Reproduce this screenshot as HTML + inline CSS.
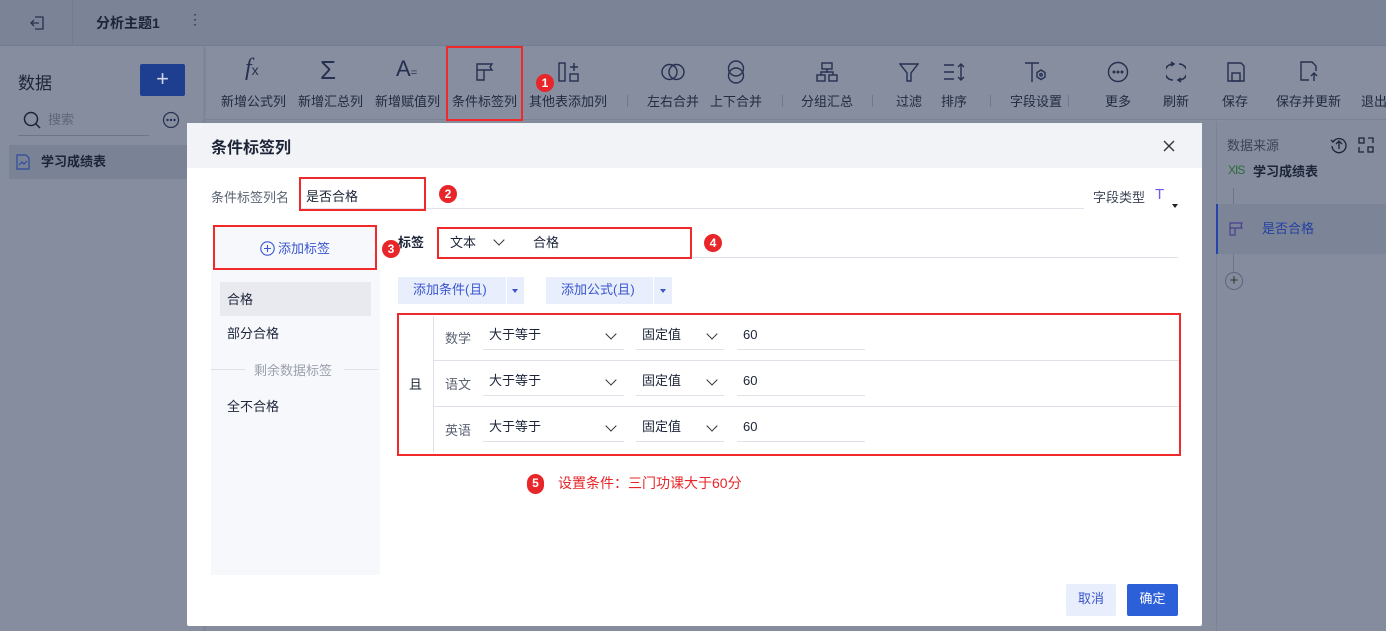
<!DOCTYPE html>
<html><head><meta charset="utf-8"><style>
*{box-sizing:border-box;margin:0;padding:0}
body{width:1386px;height:631px;overflow:hidden;position:relative;background:#858d9e;font-family:"Liberation Sans","Noto Sans CJK SC",sans-serif;font-size:13px;color:#1c2438}
.a{position:absolute}
.tb{text-align:center;font-size:13px;color:#222b40;white-space:nowrap}
.ic{position:absolute;top:60px}
.red{border:2px solid #f02a2a}
.num{position:absolute;width:18px;height:18px;border-radius:50%;background:#e8262a;color:#fff;font-size:12px;text-align:center;line-height:18px;font-weight:bold}
.sep{position:absolute;top:95px;width:1px;height:12px;background:#6f7890}
.sel{position:absolute;border-bottom:1px solid #dfe2e8;height:26px;line-height:22px;padding-left:6px;font-size:13px;color:#1c2438}
.chev{position:absolute;top:6px;width:8px;height:8px;border-right:1.5px solid #333;border-bottom:1.5px solid #333;transform:rotate(45deg)}
.m{margin-top:-2px}
</style></head><body>
<div class="a" style="left:0;top:0;width:1386px;height:46px;background:#7b8497;border-bottom:1px solid #737c90"></div>
<div class="a" style="left:72px;top:0;width:1px;height:46px;background:#737c90"></div>
<svg class="a" style="left:28px;top:14px" width="18" height="18" viewBox="0 0 18 18" fill="none" stroke="#263050" stroke-width="1.3"><path d="M7 3h8v12H7M3 9h8M6 6l-3 3 3 3"/></svg>
<div class="a" style="left:96px;top:13px;font-size:14px;font-weight:bold;color:#1c2438">分析主题1</div>
<div class="a" style="left:188px;top:11px;font-size:14px;color:#333">⋮</div>
<div class="a" style="left:0;top:47px;width:203px;height:584px;background:#858d9e"></div>
<div class="a" style="left:18px;top:69px;font-size:17px;color:#1c2438">数据</div>
<div class="a" style="left:140px;top:64px;width:45px;height:32px;background:#1e3f8f;border-radius:2px;color:#d0d6e6;font-size:22px;text-align:center;line-height:30px">+</div>
<svg class="a" style="left:22px;top:110px" width="20" height="20" viewBox="0 0 20 20" fill="none" stroke="#1c2438" stroke-width="1.5"><circle cx="9" cy="9" r="6.5"/><path d="M14 14l4 4"/></svg>
<div class="a" style="left:48px;top:109px;color:#5e6678;font-size:13px">搜索</div>
<div class="a" style="left:18px;top:135px;width:131px;height:1px;background:#6d7589"></div>
<svg class="a" style="left:162px;top:111px" width="18" height="18" viewBox="0 0 18 18" fill="none" stroke="#263050" stroke-width="1.2"><circle cx="9" cy="9" r="7.5"/><circle cx="5.5" cy="9" r=".6" fill="#263050"/><circle cx="9" cy="9" r=".6" fill="#263050"/><circle cx="12.5" cy="9" r=".6" fill="#263050"/></svg>
<div class="a" style="left:9px;top:145px;width:180px;height:34px;background:#7a8296"></div>
<svg class="a" style="left:16px;top:154px" width="14" height="16" viewBox="0 0 14 16" fill="none" stroke="#2f4aa0" stroke-width="1.2"><path d="M1 1h9l3 3v11H1z"/><path d="M3 11l3-3 2 2 3-3"/></svg>
<div class="a" style="left:41px;top:151px;font-size:13px;font-weight:bold;color:#1c2438">学习成绩表</div>
<div class="a" style="left:206px;top:47px;width:1180px;height:73px;background:#868e9f;border-bottom:1px solid #7b8497"></div>
<div class="a" style="left:203px;top:47px;width:3px;height:584px;background:#7e8699"></div>
<div class="a" style="left:206px;top:121px;width:1180px;height:510px;background:#848c9d"></div>
<div class="a" style="left:1216px;top:121px;width:1px;height:510px;background:#7a8296"></div>
<div class="ic tb" style="left:245px;top:55px;font-style:italic;font-size:24px;font-family:'Liberation Serif',serif;color:#263050">f<span style="font-size:14px;font-style:normal;font-family:'Liberation Sans'">x</span></div>
<div class="ic tb" style="left:320px;top:55px;font-size:26px;color:#263050">Σ</div>
<div class="ic tb" style="left:396px;top:56px;font-size:22px;color:#263050">A<span style="font-size:11px">=</span></div>
<svg class="a" style="left:475px;top:62px" width="20" height="20" viewBox="0 0 20 20" fill="none" stroke="#263050" stroke-width="1.4"><path d="M2 2h15l-2 3 2 3H9v10H2zM2 8h7"/></svg>
<svg class="a" style="left:558px;top:61px" width="22" height="22" viewBox="0 0 22 22" fill="none" stroke="#263050" stroke-width="1.4"><rect x="1" y="2" width="6" height="18"/><rect x="12" y="13" width="8" height="7"/><path d="M16 2v8M12 6h8"/></svg>
<svg class="a" style="left:661px;top:62px" width="24" height="20" viewBox="0 0 24 20" fill="none" stroke="#263050" stroke-width="1.4"><circle cx="8.5" cy="10" r="7.5"/><circle cx="15.5" cy="10" r="7.5"/></svg>
<svg class="a" style="left:726px;top:60px" width="20" height="24" viewBox="0 0 20 24" fill="none" stroke="#263050" stroke-width="1.4"><circle cx="10" cy="8.5" r="7.5"/><circle cx="10" cy="15.5" r="7.5"/></svg>
<svg class="a" style="left:816px;top:62px" width="22" height="20" viewBox="0 0 22 20" fill="none" stroke="#263050" stroke-width="1.4"><rect x="6" y="1" width="10" height="6"/><rect x="1" y="13" width="8" height="6"/><rect x="13" y="13" width="8" height="6"/><path d="M11 7v3M5 13v-3h12v3"/></svg>
<svg class="a" style="left:899px;top:62px" width="20" height="20" viewBox="0 0 20 20" fill="none" stroke="#263050" stroke-width="1.4"><path d="M1 2h18l-7 9v8h-4v-8z"/></svg>
<svg class="a" style="left:943px;top:62px" width="24" height="20" viewBox="0 0 24 20" fill="none" stroke="#263050" stroke-width="1.4"><path d="M1 3h10M1 10h10M1 17h10M18 2v16M15 5l3-3 3 3M15 15l3 3 3-3"/></svg>
<svg class="a" style="left:1024px;top:61px" width="24" height="22" viewBox="0 0 24 22" fill="none" stroke="#263050" stroke-width="1.4"><path d="M1 2h14M8 2v19"/><path d="M17 9l4 2.5v4.5l-4 2.5-4-2.5v-4.5z"/><circle cx="17" cy="13.8" r="1.2"/></svg>
<svg class="a" style="left:1107px;top:61px" width="22" height="22" viewBox="0 0 22 22" fill="none" stroke="#263050" stroke-width="1.4"><circle cx="11" cy="11" r="9.5"/><circle cx="7" cy="11" r=".8" fill="#263050"/><circle cx="11" cy="11" r=".8" fill="#263050"/><circle cx="15" cy="11" r=".8" fill="#263050"/></svg>
<svg class="a" style="left:1166px;top:61px" width="20" height="22" viewBox="0 0 20 22" fill="none" stroke="#263050" stroke-width="1.6"><path d="M7 3a8 8 0 0 0 0 16M13 3a8 8 0 0 1 0 16"/><path d="M5 1l3 2-3 2M15 17l-3 2 3 2"/></svg>
<svg class="a" style="left:1227px;top:62px" width="18" height="20" viewBox="0 0 18 20" fill="none" stroke="#263050" stroke-width="1.4"><path d="M1 1h13l3 3v15H1z"/><rect x="5" y="11" width="8" height="8"/></svg>
<svg class="a" style="left:1299px;top:61px" width="22" height="22" viewBox="0 0 22 22" fill="none" stroke="#263050" stroke-width="1.4"><path d="M10 19H2V1h11l4 4v5"/><path d="M15 20v-8M12 15l3-3 3 3"/></svg>
<div class="a tb" style="left:221px;top:91px">新增公式列</div>
<div class="a tb" style="left:298px;top:91px">新增汇总列</div>
<div class="a tb" style="left:375px;top:91px">新增赋值列</div>
<div class="a tb" style="left:452px;top:91px">条件标签列</div>
<div class="a tb" style="left:529px;top:91px">其他表添加列</div>
<div class="sep" style="left:627px"></div>
<div class="a tb" style="left:647px;top:91px">左右合并</div>
<div class="a tb" style="left:710px;top:91px">上下合并</div>
<div class="sep" style="left:782px"></div>
<div class="a tb" style="left:801px;top:91px">分组汇总</div>
<div class="sep" style="left:872px"></div>
<div class="a tb" style="left:896px;top:91px">过滤</div>
<div class="a tb" style="left:941px;top:91px">排序</div>
<div class="sep" style="left:990px"></div>
<div class="a tb" style="left:1010px;top:91px">字段设置</div>
<div class="sep" style="left:1068px"></div>
<div class="a tb" style="left:1105px;top:91px">更多</div>
<div class="a tb" style="left:1163px;top:91px">刷新</div>
<div class="a tb" style="left:1222px;top:91px">保存</div>
<div class="a tb" style="left:1276px;top:91px">保存并更新</div>
<div class="a tb" style="left:1361px;top:91px">退出</div>
<div class="a red" style="left:446px;top:46px;width:77px;height:75px"></div>
<div class="num" style="left:536px;top:74px">1</div>
<div class="a" style="left:1227px;top:135px;font-size:13px;color:#3c4458">数据来源</div>
<svg class="a" style="left:1330px;top:136px" width="18" height="18" viewBox="0 0 18 18" fill="none" stroke="#1c2438" stroke-width="1.3"><path d="M3 6a7 7 0 1 1-1 4"/><path d="M1 4l2 2 2-2"/><path d="M9 13V5M6 8l3-3 3 3"/></svg>
<svg class="a" style="left:1358px;top:137px" width="16" height="16" viewBox="0 0 16 16" fill="none" stroke="#1c2438" stroke-width="1.3"><rect x="1" y="1" width="5" height="5"/><rect x="10" y="10" width="5" height="5"/><path d="M1 10v5h5M10 1h5v5"/></svg>
<div class="a" style="left:1228px;top:163px;font-size:12px;color:#2e6b3c;letter-spacing:-1px">XIS</div>
<div class="a" style="left:1253px;top:161px;font-size:13px;font-weight:bold;color:#1c2438">学习成绩表</div>
<div class="a" style="left:1233px;top:188px;width:1px;height:18px;background:#6d7589"></div>
<div class="a" style="left:1216px;top:204px;width:170px;height:50px;background:#7c8498"></div>
<div class="a" style="left:1216px;top:204px;width:2px;height:50px;background:#2346a8"></div>
<svg class="a" style="left:1229px;top:222px" width="14" height="14" viewBox="0 0 14 14" fill="none" stroke="#4a3f8f" stroke-width="1.2"><path d="M1 1h12l-1 3 1 2H6v7H1zM1 6h5"/></svg>
<div class="a" style="left:1262px;top:218px;font-size:13px;color:#2440a0">是否合格</div>
<div class="a" style="left:1233px;top:254px;width:1px;height:18px;background:#6d7589"></div>
<div class="a" style="left:1225px;top:272px;width:18px;height:18px;border:1px solid #5e6678;border-radius:50%;text-align:center;line-height:15px;font-size:15px;color:#333">+</div>
<div class="a" style="left:187px;top:123px;width:1015px;height:503px;background:#fff;border-radius:2px"></div>
<div class="a" style="left:187px;top:123px;width:1015px;height:45px;background:#f2f3f6"></div>
<div class="a" style="left:211px;top:134px;font-size:16px;font-weight:bold;color:#1c2438">条件标签列</div>
<svg class="a" style="left:1163px;top:140px" width="12" height="12" viewBox="0 0 12 12" stroke="#333" stroke-width="1.4"><path d="M1 1l10 10M11 1L1 11"/></svg>
<div class="a" style="left:211px;top:187px;font-size:13px;color:#5a6272">条件标签列名</div>
<div class="a" style="left:300px;top:208px;width:784px;height:1px;background:#dfe2e8"></div>
<div class="a red" style="left:299px;top:177px;width:127px;height:34px"></div>
<div class="a" style="left:306px;top:186px;font-size:13px;color:#1c2438">是否合格</div>
<div class="num" style="left:439px;top:185px">2</div>
<div class="a" style="left:1093px;top:187px;font-size:13px;color:#3c4458">字段类型</div>
<div class="a" style="left:1155px;top:186px;font-size:15px;color:#6a5fe0">T</div>
<div class="a" style="left:1172px;top:204px;border-left:3px solid transparent;border-right:3px solid transparent;border-top:4px solid #222"></div>
<div class="a" style="left:211px;top:270px;width:169px;height:305px;background:#f7f8fc"></div>
<div class="a" style="left:213px;top:225px;width:164px;height:45px;background:#f7f8fc;border:2px solid #f02a2a"></div>
<svg class="a" style="left:260px;top:241px" width="15" height="15" viewBox="0 0 15 15" fill="none" stroke="#3a55d0" stroke-width="1.1"><circle cx="7.5" cy="7.5" r="6.7"/><path d="M7.5 4v7M4 7.5h7"/></svg>
<div class="a" style="left:278px;top:238px;font-size:13px;color:#3a55d0">添加标签</div>
<div class="num" style="left:382px;top:240px">3</div>
<div class="a" style="left:220px;top:282px;width:151px;height:34px;background:#e8eaf0"></div>
<div class="a" style="left:227px;top:289px;font-size:13px;color:#1c2438">合格</div>
<div class="a" style="left:227px;top:323px;font-size:13px;color:#1c2438">部分合格</div>
<div class="a" style="left:211px;top:369px;width:34px;height:1px;background:#dfe2e8"></div>
<div class="a" style="left:344px;top:369px;width:34px;height:1px;background:#dfe2e8"></div>
<div class="a" style="left:254px;top:360px;font-size:13px;color:#9aa0ad">剩余数据标签</div>
<div class="a" style="left:227px;top:396px;font-size:13px;color:#1c2438">全不合格</div>
<div class="a" style="left:398px;top:232px;font-size:13px;font-weight:bold;color:#1c2438">标签</div>
<div class="a" style="left:437px;top:257px;width:741px;height:1px;background:#dfe2e8"></div>
<div class="a red" style="left:437px;top:227px;width:255px;height:32px"></div>
<div class="a" style="left:450px;top:232px;font-size:13px;color:#1c2438">文本</div>
<div class="chev" style="left:495px;top:236px"></div>
<div class="a" style="left:533px;top:232px;font-size:13px;color:#1c2438">合格</div>
<div class="num" style="left:704px;top:234px">4</div>
<div class="a" style="left:398px;top:277px;width:108px;height:27px;background:#e8eefb;color:#3a55d0;line-height:25px;padding-left:15px">添加条件(且)</div>
<div class="a" style="left:507px;top:277px;width:17px;height:27px;background:#e8eefb"></div>
<div class="a" style="left:512px;top:289px;border-left:3px solid transparent;border-right:3px solid transparent;border-top:4px solid #3a55d0"></div>
<div class="a" style="left:546px;top:277px;width:107px;height:27px;background:#e8eefb;color:#3a55d0;line-height:25px;padding-left:15px">添加公式(且)</div>
<div class="a" style="left:654px;top:277px;width:18px;height:27px;background:#e8eefb"></div>
<div class="a" style="left:660px;top:289px;border-left:3px solid transparent;border-right:3px solid transparent;border-top:4px solid #3a55d0"></div>
<div class="a red" style="left:397px;top:313px;width:784px;height:143px"></div>
<div class="a" style="left:433px;top:316px;width:1px;height:137px;background:#dfe2e8"></div>
<div class="a" style="left:434px;top:360px;width:745px;height:1px;background:#dfe2e8"></div>
<div class="a" style="left:434px;top:406px;width:745px;height:1px;background:#dfe2e8"></div>
<div class="a" style="left:409px;top:374px;font-size:13px;color:#1c2438">且</div>
<div class="a" style="left:445px;top:328px;color:#5a6272">数学</div>
<div class="sel" style="left:483px;top:324px;width:141px">大于等于<div class="chev" style="left:124px"></div></div>
<div class="sel" style="left:636px;top:324px;width:88px">固定值<div class="chev" style="left:72px"></div></div>
<div class="sel" style="left:737px;top:324px;width:128px">60</div>
<div class="a" style="left:445px;top:374px;color:#5a6272">语文</div>
<div class="sel" style="left:483px;top:370px;width:141px">大于等于<div class="chev" style="left:124px"></div></div>
<div class="sel" style="left:636px;top:370px;width:88px">固定值<div class="chev" style="left:72px"></div></div>
<div class="sel" style="left:737px;top:370px;width:128px">60</div>
<div class="a" style="left:445px;top:420px;color:#5a6272">英语</div>
<div class="sel" style="left:483px;top:416px;width:141px">大于等于<div class="chev" style="left:124px"></div></div>
<div class="sel" style="left:636px;top:416px;width:88px">固定值<div class="chev" style="left:72px"></div></div>
<div class="sel" style="left:737px;top:416px;width:128px">60</div>
<div class="num" style="left:527px;top:474px;width:17px;height:20px;border-radius:9px">5</div>
<div class="a" style="left:558px;top:473px;font-size:14px;color:#e8262a">设置条件：三门功课大于60分</div>
<div class="a" style="left:1066px;top:584px;width:50px;height:32px;background:#e8eefb;border-radius:2px;color:#3a55d0;text-align:center;line-height:30px">取消</div>
<div class="a" style="left:1127px;top:584px;width:51px;height:32px;background:#2b60d8;border-radius:2px;color:#fff;text-align:center;line-height:30px">确定</div>
</body></html>
